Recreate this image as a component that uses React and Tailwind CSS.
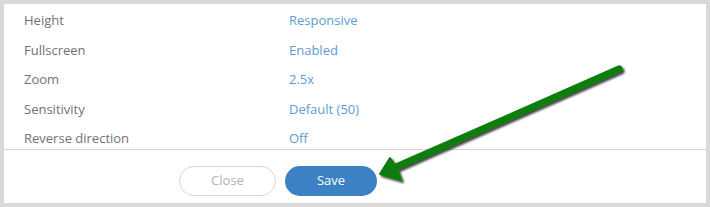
import React from 'react';

const rows = [
  { label: 'Height', value: 'Responsive' },
  { label: 'Fullscreen', value: 'Enabled' },
  { label: 'Zoom', value: '2.5x' },
  { label: 'Sensitivity', value: 'Default (50)' },
  { label: 'Reverse direction', value: 'Off' },
];

function Arrow() {
  return (
    <svg className="pointer-events-none absolute left-0 top-0" width="710" height="207" viewBox="0 0 710 207">
      <defs>
        <filter id="shadow" x="-10%" y="-10%" width="120%" height="140%">
          <feDropShadow dx="2" dy="2" stdDeviation="1.2" floodColor="#000" floodOpacity="0.75" />
        </filter>
      </defs>
      <g filter="url(#shadow)">
        <line x1="619" y1="69" x2="396" y2="167" stroke="#0b7d0b" strokeWidth="7" strokeLinecap="round" />
        <polygon points="380,174 390,158 396,167 401,180" fill="#0b7d0b" stroke="#0b7d0b" strokeWidth="2" strokeLinejoin="round" />
      </g>
    </svg>
  );
}

export default function App() {
  return (
    <div className="relative h-[207px] w-[710px] bg-[#d9d9d9] p-1 font-['Open_Sans',sans-serif]">
      <div className="flex h-[199px] w-[702px] flex-col bg-white">
        {/* Settings list */}
        <div className="h-[145px] pt-[2px]">
          {rows.map((row) => (
            <div key={row.label} className="flex h-[29.5px] items-center text-[13px]">
              <span className="w-[285px] pl-5 text-[#727272]">{row.label}</span>
              <span className="text-[#5e9bd4]">{row.value}</span>
            </div>
          ))}
        </div>

        {/* Footer */}
        <div className="border-t border-[#d4d4d4] pt-4">
          <div className="ml-[175px] flex gap-[9px]">
            <button className="h-[30px] w-[97px] rounded-full border border-[#d6d6d6] bg-white text-[13px] text-[#b3b3b3]">
              Close
            </button>
            <button className="h-[30px] w-[92px] rounded-full bg-[#3b81c3] text-[13px] text-white">
              Save
            </button>
          </div>
        </div>
      </div>
      <Arrow />
    </div>
  );
}
